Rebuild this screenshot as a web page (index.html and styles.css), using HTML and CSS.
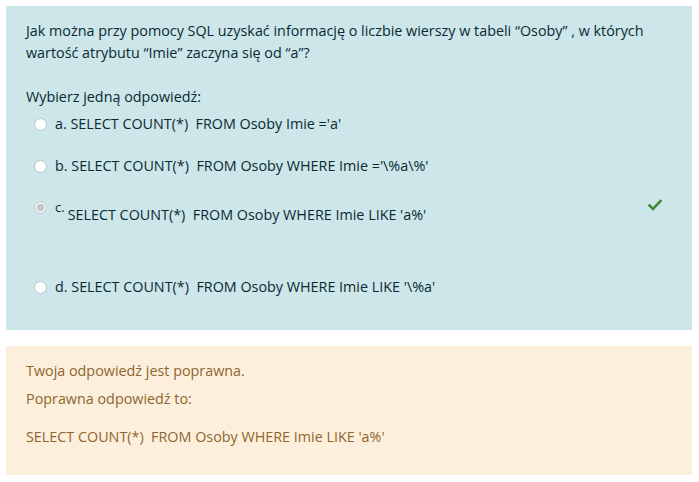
FILE: index.html
```html
<!DOCTYPE html>
<html lang="pl">
<head>
<meta charset="utf-8">
<link rel="stylesheet" href="styles.css">
</head>
<body>
<div class="formulation">
  <p class="qtext">Jak można przy pomocy SQL uzyskać informację o liczbie wierszy w tabeli “Osoby” , w których wartość atrybutu “Imie” zaczyna się od “a”?</p>
  <div class="prompt">Wybierz jedną odpowiedź:</div>
  <div class="answers">
    <div class="opt opt-a"><span class="radio"></span><span class="label">a. SELECT COUNT(*)&nbsp; FROM Osoby Imie ='a'</span></div>
    <div class="opt opt-b"><span class="radio"></span><span class="label">b. SELECT COUNT(*)&nbsp; FROM Osoby WHERE Imie ='\%a\%'</span></div>
    <div class="opt opt-c"><span class="radio checked"></span><span class="label"><span class="letter">c.</span><span class="ctext">SELECT COUNT(*)&nbsp; FROM Osoby WHERE Imie LIKE 'a%'</span></span>
      <svg class="tick" width="14" height="12" viewBox="0 0 14 12"><path d="M1.5 6.5 L5 10 L12.5 2" fill="none" stroke="#3f8a3a" stroke-width="2.6" stroke-linecap="square"/></svg>
    </div>
    <div class="opt opt-d"><span class="radio"></span><span class="label">d. SELECT COUNT(*)&nbsp; FROM Osoby WHERE Imie LIKE '\%a'</span></div>
  </div>
</div>
<div class="outcome">
  <p class="feedback">Twoja odpowiedź jest poprawna.</p>
  <p class="right">Poprawna odpowiedź to:</p>
  <p class="rightval">SELECT COUNT(*)&nbsp; FROM Osoby WHERE Imie LIKE 'a%'</p>
</div>
</body>
</html>
```
FILE: styles.css
```css
html, body { margin: 0; padding: 0; background: #fff; }
body {
  padding: 6px 7px 6px 6px;
  font-family: "Open Sans", "Noto Sans", sans-serif;
  font-size: 14.35px;
  line-height: 22px;
}
p { margin: 0; }
.formulation {
  background: #cce6ea;
  color: #0a2a30;
  padding: 14px 20px 32px 20px;
}
.qtext { margin-bottom: 22px; }
.prompt { margin-bottom: 5px; }
.answers { display: flex; flex-direction: column; }
.opt { display: flex; align-items: center; position: relative; padding-left: 8px; }
.opt-a { height: 22px; }
.opt-b { height: 22px; margin-top: 20px; }
.opt-c { margin-top: 21px; align-items: flex-start; }
.opt-d { margin-top: 50px; height: 22px; }
.radio {
  width: 11px; height: 11px; border-radius: 50%;
  border: 1px solid #b9c4c7; background: #fff;
  flex: none; margin-right: 8px;
}
.radio.checked { background: radial-gradient(circle, #c2c8ca 0 3.5px, #eef0f0 4px); border-color: #c4cbcd; }
.opt-c .radio { margin-top: 3px; }
.letter { font-size: 13px; vertical-align: top; line-height: 14px; margin-right: 3px; position: relative; top: 2px; }
.ctext { display: inline-block; margin-top: 6px; }
.tick { position: absolute; right: 10px; top: 1px; }
.outcome {
  margin-top: 16px;
  background: #fcefdc;
  color: #8e662e;
  padding: 14px 20px 27px 20px;
}
.feedback { margin-bottom: 6px; }
.right { margin-bottom: 16px; }
```
